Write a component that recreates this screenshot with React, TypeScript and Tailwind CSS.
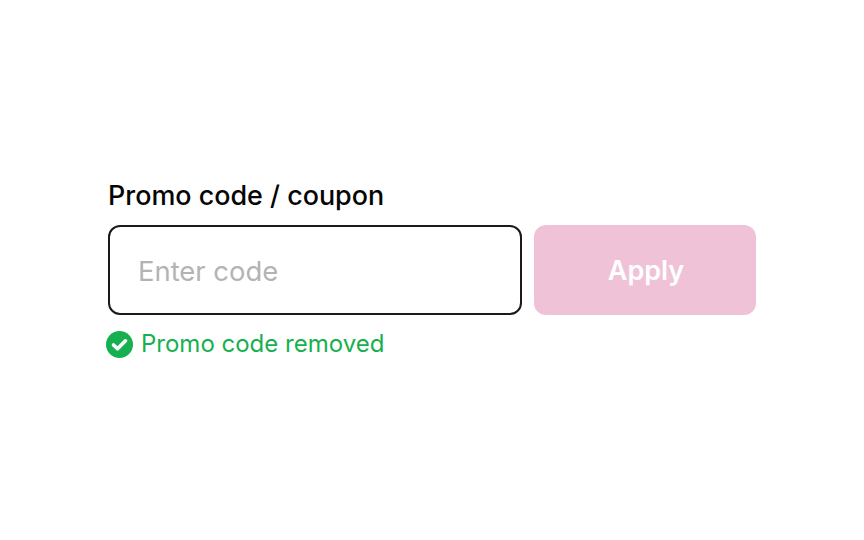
export default function App() {
  return (
    <div className="w-[864px] h-[540px] bg-white pt-[180px] pl-[108px] font-['Inter',sans-serif]">
      <div className="w-[648px]">
        <label className="block text-[26.9px] leading-[30px] font-medium text-[#050505] mb-[15px]">Promo code / coupon</label>
        <div className="flex gap-3">
          <div className="w-[414px] h-[90px] border-2 border-[#1a1a1a] rounded-[12px] flex items-center pl-[28px] pt-[3px] text-[27.4px] text-[#b3b3b3]">Enter code</div>
          <div className="w-[222px] h-[90px] rounded-[12px] bg-[#f0c2d8] flex items-center justify-center pl-[2px] pt-[3px] text-[27px] font-semibold text-white">Apply</div>
        </div>
        <div className="flex items-center gap-[8px] mt-[14px] -ml-[2px] text-[#16b050] text-[24px] leading-[30px]">
          <svg width="27" height="27" viewBox="0 0 27 27" className="shrink-0">
            <circle cx="13.5" cy="13.5" r="13.5" fill="#16b050" />
            <path d="M7.5 14l4 3.8 8-8" fill="none" stroke="#ffffff" strokeWidth="3.6" strokeLinecap="round" strokeLinejoin="round" />
          </svg>
          <span>Promo code removed</span>
        </div>
      </div>
    </div>
  );
}
